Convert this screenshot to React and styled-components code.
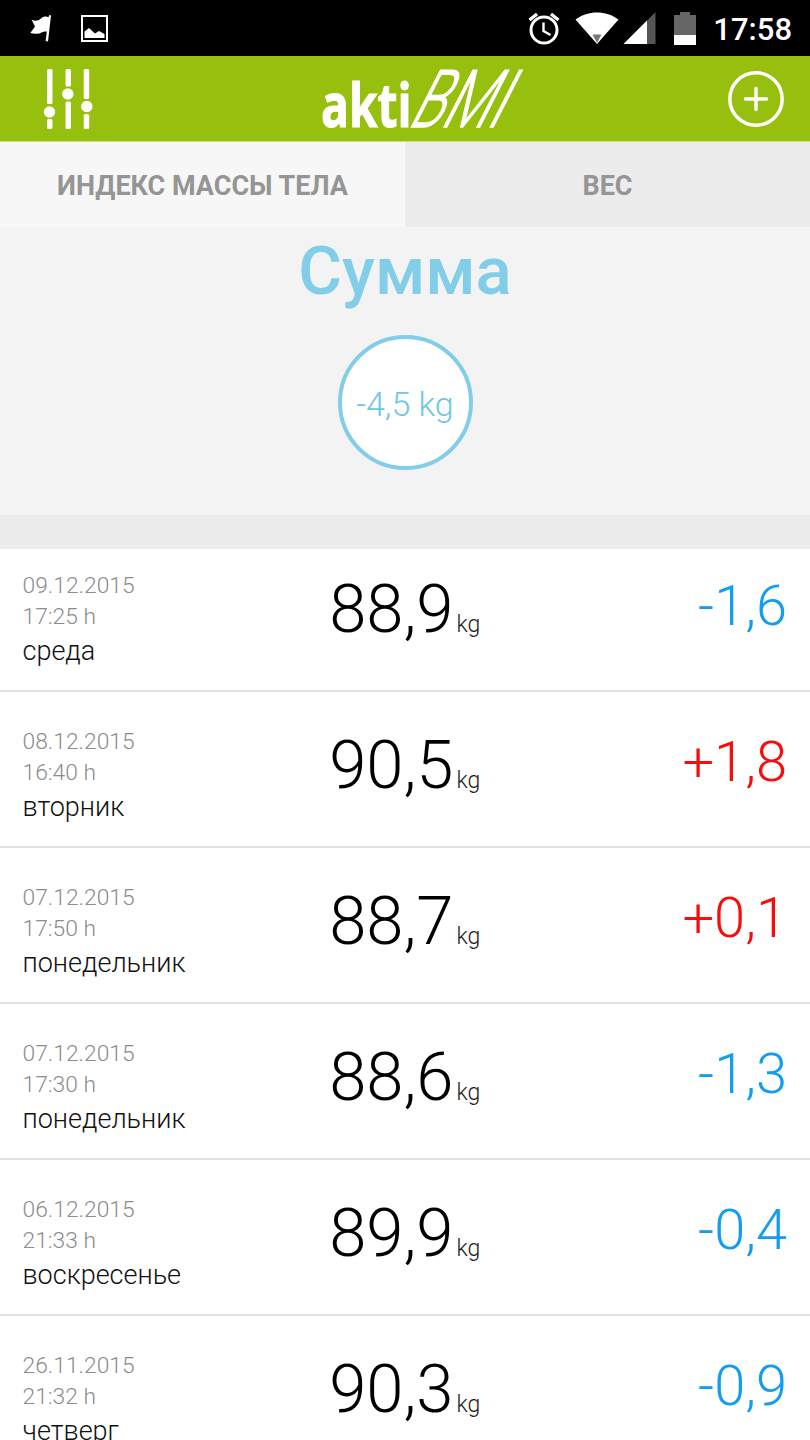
import React from 'react'
import styled, {createGlobalStyle} from 'styled-components'

const entries = [
  {date: '09.12.2015', time: '17:25', day: 'среда', weight: '88,9', diff: '-1,6'},
  {date: '08.12.2015', time: '16:40', day: 'вторник', weight: '90,5', diff: '+1,8'},
  {date: '07.12.2015', time: '17:50', day: 'понедельник', weight: '88,7', diff: '+0,1'},
  {date: '07.12.2015', time: '17:30', day: 'понедельник', weight: '88,6', diff: '-1,3'},
  {date: '06.12.2015', time: '21:33', day: 'воскресенье', weight: '89,9', diff: '-0,4'},
  {date: '26.11.2015', time: '21:32', day: 'четверг', weight: '90,3', diff: '-0,9'}
]

const FlagIcon = () => (
  <svg width="24" height="28" viewBox="0 0 24 28" fill="#fff">
    <path d="M1.500 5.500C5 7.500 8 7 11 4.500C13.500 2.500 16 2 18.500 3.200L19.300 1L21 1.500L18 27.500L15.600 27L16.800 17.500C13 17 11 19.500 7 19.800C4.500 20 2.500 19.500 0.300 19L5 12.500Z" />
  </svg>
)

const PictureIcon = () => (
  <svg width="27" height="27" viewBox="0 0 27 27">
    <rect x="1" y="1" width="25" height="25" fill="none" stroke="#fff" strokeWidth="2" />
    <path d="M3.500 23V16.500L8 13L14 18.500L18 16L23.500 19V23Z" fill="#fff" />
  </svg>
)

const AlarmIcon = () => (
  <svg width="32" height="33" viewBox="0 0 32 33" fill="none" stroke="#fff">
    <circle cx="16" cy="18" r="13" strokeWidth="3" />
    <path d="M1.500 8L9 2M30.500 8L23 2" strokeWidth="3.400" />
    <path d="M15.500 10.500V19L22.500 23" strokeWidth="2.400" />
  </svg>
)

const WifiIcon = () => (
  <svg width="44" height="32" viewBox="0 0 44 32">
    <path d="M0.500 7.500C13-2 31-2 43.500 7.500L22 32Z" fill="#fff" />
    <path d="M17.500 22.500H26.500L22 31Z" fill="#777" />
  </svg>
)

const SignalIcon = () => (
  <svg width="33" height="32" viewBox="0 0 33 32">
    <path d="M32.500 0V32H0.500Z" fill="#555" />
    <path d="M24 8.500V32H0.500Z" fill="#fff" />
  </svg>
)

const BatteryIcon = () => (
  <svg width="22" height="33" viewBox="0 0 22 33">
    <path d="M6 0H16V3H22V23H0V3H6Z" fill="#666" />
    <path d="M0 23H22V33H0Z" fill="#fff" />
  </svg>
)

const SlidersIcon = () => (
  <svg width="50" height="60" viewBox="0 0 50 60" fill="#fff">
    <rect x="4" y="0" width="5.500" height="35" rx="1.500" />
    <rect x="4" y="50" width="5.500" height="10" rx="1.500" />
    <circle cx="6.500" cy="43" r="5.700" />
    <rect x="22.500" y="0" width="5.500" height="17.500" rx="1.500" />
    <rect x="22.500" y="32.500" width="5.500" height="27.500" rx="1.500" />
    <circle cx="24.800" cy="25" r="5.700" />
    <rect x="40.700" y="0" width="5.500" height="30" rx="1.500" />
    <rect x="40.700" y="45" width="5.500" height="15" rx="1.500" />
    <circle cx="43.800" cy="37.500" r="5.700" />
  </svg>
)

const AddIcon = () => (
  <svg width="56" height="56" viewBox="0 0 56 56" fill="none" stroke="#fff">
    <circle cx="28" cy="28" r="26.200" strokeWidth="3.500" />
    <path d="M28 17.500V38.500M17.500 28H38.500" strokeWidth="3.500" strokeLinecap="round" />
  </svg>
)

const App = () => {
  return (
    <>
      <GlobalStyle />
      <Screen>
        <StatusBar>
          <FlagIcon />
          <PictureIcon />
          <Indicators>
            <AlarmIcon />
            <WifiIcon />
            <SignalIcon />
            <BatteryIcon />
          </Indicators>
          <Clock>17:58</Clock>
        </StatusBar>
        <Header>
          <IconButton>
            <SlidersIcon />
          </IconButton>
          <Logo>
            <LogoBold>akti</LogoBold>
            <LogoScript>BMI</LogoScript>
          </Logo>
          <IconButton>
            <AddIcon />
          </IconButton>
        </Header>
        <Tabs>
          <Tab $active>Индекс массы тела</Tab>
          <Tab>Вес</Tab>
        </Tabs>
        <Summary>
          <Title>Сумма</Title>
          <Total>-4,5 kg</Total>
        </Summary>
        <Divider />
        <List>
          {entries.map(entry => (
            <Row key={entry.date + entry.time}>
              <div>
                <Stamp>{entry.date}</Stamp>
                <Stamp>{entry.time} h</Stamp>
                <Day>{entry.day}</Day>
              </div>
              <Weight>
                {entry.weight}
                <Unit>kg</Unit>
              </Weight>
              <Diff $up={entry.diff.startsWith('+')}>{entry.diff}</Diff>
            </Row>
          ))}
        </List>
      </Screen>
    </>
  )
}

export default App

const GlobalStyle = createGlobalStyle`
  * {
    box-sizing: border-box;
  }
  body {
    margin: 0;
    background: #fff;
    font-family: Roboto, sans-serif;
  }
  svg {
    display: block;
    flex: none;
  }
`

const Screen = styled.div`
  width: 810px;
  height: 1440px;
  overflow: hidden;
  display: flex;
  flex-direction: column;
`

const StatusBar = styled.div`
  flex: none;
  height: 56px;
  padding: 0 18px 0 30px;
  display: flex;
  align-items: center;
  gap: 27px;
  background: #000;
`

const Indicators = styled.div`
  margin-left: auto;
  margin-right: -10px;
  display: flex;
  align-items: center;
  gap: 4px;

  svg:first-child {
    margin-right: 11px;
  }
  svg:last-child {
    margin-left: 14px;
  }
`

const Clock = styled.div`
  color: #fff;
  font-size: 31px;
  font-weight: 500;
  line-height: 36px;
  padding-top: 3px;
`

const Header = styled.div`
  flex: none;
  height: 86px;
  padding: 0 26px 0 43px;
  display: flex;
  align-items: center;
  justify-content: space-between;
  background: #97bf0d;
  border-bottom: 1px solid #c9de8a;
`

const IconButton = styled.button`
  padding: 0;
  border: 0;
  background: none;
`

const Logo = styled.div`
  display: flex;
  align-items: baseline;
  width: 204px;
  height: 76px;
  margin-left: 24px;
  color: #fff;
  white-space: nowrap;
`

const LogoBold = styled.span`
  width: 80px;
  padding-top: 5px;
  font: bold 60px/76px 'Open Sans', sans-serif;
  transform: scaleX(0.77);
  transform-origin: left;
  -webkit-text-stroke: 1px #fff;
`

const LogoScript = styled.span`
  font: 300 80px/76px Roboto, sans-serif;
  transform: skewX(-27deg) scaleX(0.66);
  transform-origin: left bottom;
  -webkit-text-stroke: 1.5px #fff;
`

const Tabs = styled.div`
  flex: none;
  height: 85px;
  display: flex;
`

const Tab = styled.div`
  flex: 1;
  display: flex;
  align-items: center;
  justify-content: center;
  padding-top: 3px;
  font-size: 27px;
  font-weight: bold;
  text-transform: uppercase;
  color: #959595;
  background: ${props => (props.$active ? '#f7f7f7' : '#ececec')};
`

const Summary = styled.div`
  flex: none;
  height: 288px;
  padding-top: 4px;
  display: flex;
  flex-direction: column;
  align-items: center;
  background: #f3f3f3;
`

const Title = styled.div`
  font-size: 67px;
  font-weight: 500;
  line-height: 80px;
  color: #82cde8;
`

const Total = styled.div`
  width: 135px;
  height: 135px;
  margin-top: 24px;
  padding-top: 2px;
  display: flex;
  align-items: center;
  justify-content: center;
  border: 4px solid #82cde8;
  border-radius: 50%;
  background: #fff;
  color: #6fc6e6;
  font-size: 34px;
  font-weight: 300;
`

const Divider = styled.div`
  flex: none;
  height: 34px;
  background: #ececec;
`

const List = styled.div`
  flex: none;
`

const Row = styled.div`
  height: 156px;
  padding: 0 23px 18px 22.500px;
  display: grid;
  grid-template-columns: 1fr auto 1fr;
  align-items: end;
  border-bottom: 2px solid #e1e1e1;
  font-weight: 300;

  &:first-child {
    height: 143px;
  }
`

const Stamp = styled.div`
  font-size: 22.800px;
  line-height: 31px;
  color: #8c8c8c;
`

const Day = styled.div`
  padding-bottom: 2px;
  font-size: 27px;
  line-height: 38px;
  color: #111;
`

const Weight = styled.div`
  font-size: 67px;
  line-height: 78px;
  padding-bottom: 8px;
  color: #000;
`

const Unit = styled.span`
  margin-left: 3px;
  font-size: 23px;
  color: #222;
`

const Diff = styled.div`
  text-align: right;
  font-size: 56px;
  line-height: 66px;
  padding-bottom: 33px;
  color: ${props => (props.$up ? '#f80c0c' : '#129df0')};
`
